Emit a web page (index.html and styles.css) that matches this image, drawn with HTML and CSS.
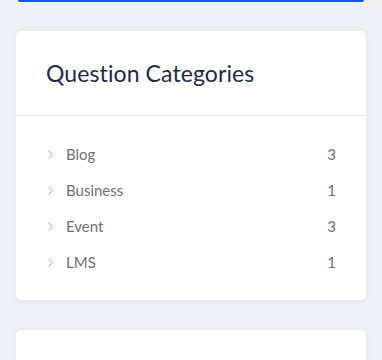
FILE: index.html
```html
<!DOCTYPE html>
<html>
<head>
<meta charset="utf-8">
<link rel="stylesheet" href="styles.css">
</head>
<body>
<div class="page">
  <div class="topbar"></div>
  <div class="card">
    <div class="card-head">
      <h3 class="card-title">Question Categories</h3>
    </div>
    <ul class="cat-list">
      <li class="cat-item"><span class="chev"><svg width="7" height="11" viewBox="0 0 7 11"><path d="M1.5 1.5l4 4-4 4" fill="none" stroke="#cf949c" stroke-width="0.9"/></svg></span><span class="cat-name">Blog</span><span class="cat-count">3</span></li>
      <li class="cat-item"><span class="chev"><svg width="7" height="11" viewBox="0 0 7 11"><path d="M1.5 1.5l4 4-4 4" fill="none" stroke="#cf949c" stroke-width="0.9"/></svg></span><span class="cat-name">Business</span><span class="cat-count">1</span></li>
      <li class="cat-item"><span class="chev"><svg width="7" height="11" viewBox="0 0 7 11"><path d="M1.5 1.5l4 4-4 4" fill="none" stroke="#cf949c" stroke-width="0.9"/></svg></span><span class="cat-name">Event</span><span class="cat-count">3</span></li>
      <li class="cat-item"><span class="chev"><svg width="7" height="11" viewBox="0 0 7 11"><path d="M1.5 1.5l4 4-4 4" fill="none" stroke="#cf949c" stroke-width="0.9"/></svg></span><span class="cat-name">LMS</span><span class="cat-count">1</span></li>
    </ul>
  </div>
  <div class="card card-next"></div>
</div>
</body>
</html>
```
FILE: styles.css
```css
html, body {
  margin: 0;
  padding: 0;
  background: #eff0f5;
  height: 100%;
  overflow: hidden;
}
body {
  font-family: "Lato", "Noto Sans", sans-serif;
}
.page {
  padding: 0 16px;
  display: flex;
  flex-direction: column;
}
.topbar {
  height: 2px;
  margin: 0 2px;
  background: #1a4fff;
  border-radius: 0 0 2px 2px;
}
.card {
  background: #fff;
  border-radius: 5px;
  box-shadow: 0 1px 6px rgba(40, 50, 90, 0.07);
  margin-top: 29px;
}
.card-head {
  height: 85px;
  padding: 0 30px;
  display: flex;
  align-items: center;
  border-bottom: 1px solid #ececf0;
  box-sizing: border-box;
}
.card-title {
  margin: 0;
  font-weight: 400;
  font-size: 23px;
  color: #1d2a4a;
  letter-spacing: 0.1px;
}
.cat-list {
  list-style: none;
  margin: 0;
  padding: 20px 30px 20px 31px;
}
.cat-item {
  height: 36px;
  display: flex;
  align-items: center;
  font-size: 15px;
  color: #707078;
}
.chev {
  width: 19px;
  display: flex;
  align-items: center;
}
.cat-name {
  flex: 1;
}
.cat-count {
  color: #707078;
}
.card-next {
  margin-top: 30px;
  height: 60px;
}
```
